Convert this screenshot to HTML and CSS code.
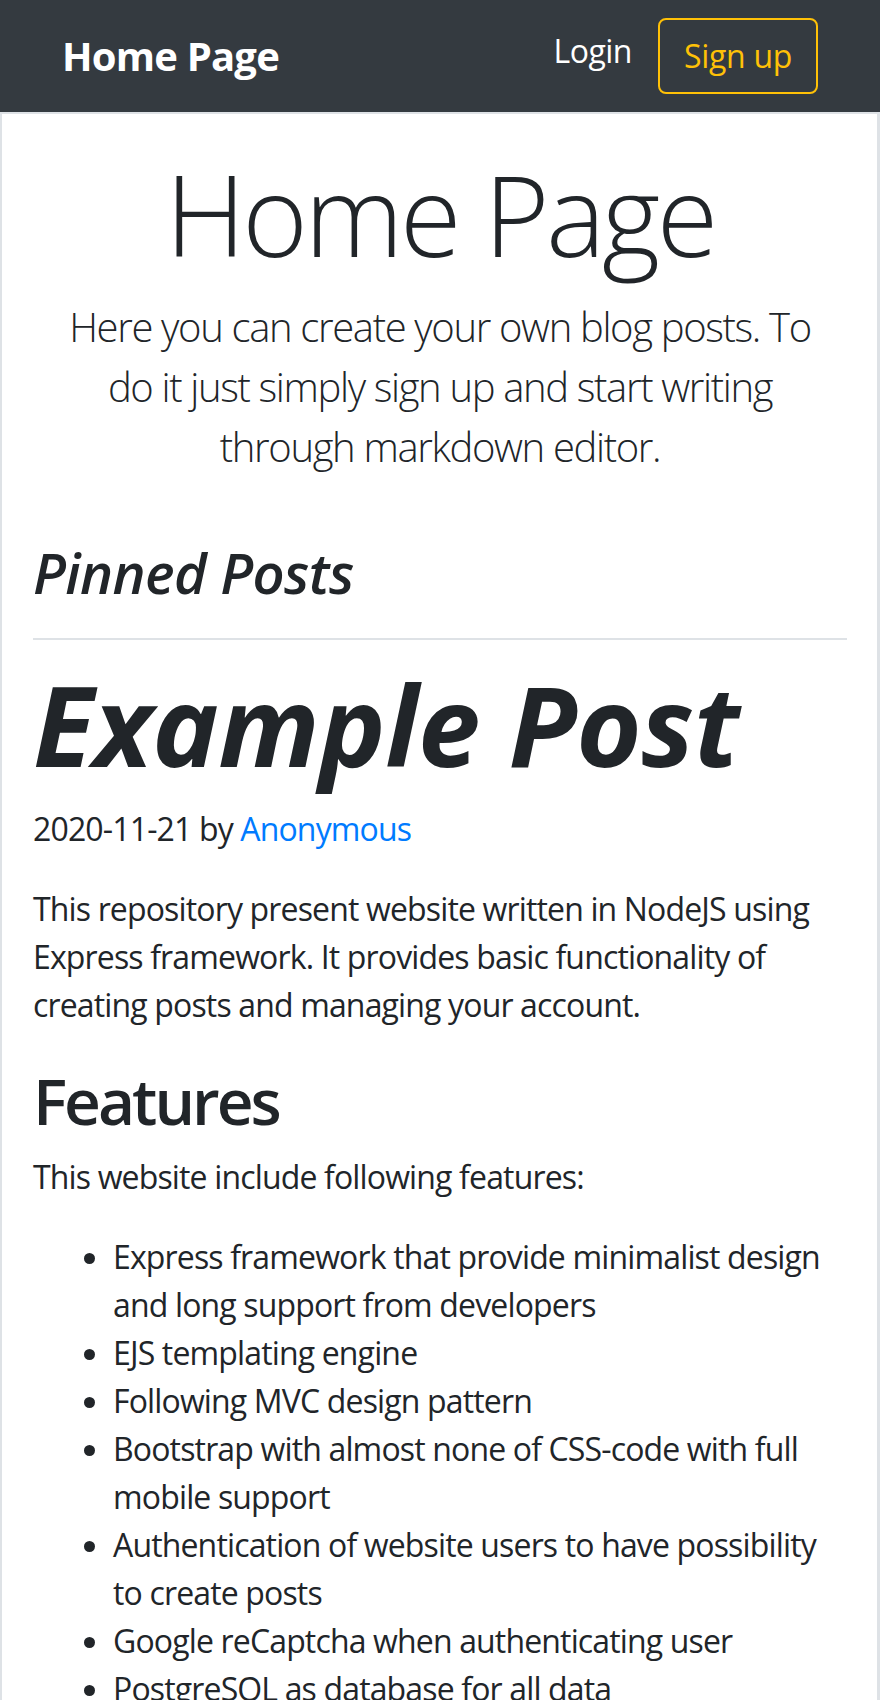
FILE: index.html
```html
<!DOCTYPE html>
<html lang="en">
<head>
<meta charset="utf-8">
<title>Home Page</title>
<link rel="stylesheet" href="styles.css">
</head>
<body>
<nav class="navbar">
  <div class="nav-inner">
    <a class="brand" href="#">Home Page</a>
    <div class="nav-right">
      <a class="nav-link" href="#">Login</a>
      <a class="btn-signup" href="#">Sign up</a>
    </div>
  </div>
</nav>
<main class="page">
  <section class="jumbotron">
    <h1 class="display">Home Page</h1>
    <p class="lead">Here you can create your own blog posts. To do it just simply sign up and start writing through markdown editor.</p>
  </section>
  <h3 class="pinned">Pinned Posts</h3>
  <hr class="divider">
  <article class="post">
    <h1 class="post-title">Example Post</h1>
    <p class="meta">2020-11-21 by <a href="#" class="author">Anonymous</a></p>
    <p class="text">This repository present website written in NodeJS using Express framework. It provides basic functionality of creating posts and managing your account.</p>
    <h2 class="section-title">Features</h2>
    <p class="intro">This website include following features:</p>
    <ul class="features">
      <li>Express framework that provide minimalist design and long support from developers</li>
      <li>EJS templating engine</li>
      <li>Following MVC design pattern</li>
      <li>Bootstrap with almost none of CSS-code with full mobile support</li>
      <li>Authentication of website users to have possibility to create posts</li>
      <li>Google reCaptcha when authenticating user</li>
      <li>PostgreSQL as database for all data</li>
    </ul>
  </article>
</main>
</body>
</html>
```

FILE: styles.css
```css
* { box-sizing: border-box; }
html, body { margin: 0; padding: 0; }
body {
  font-family: "Open Sans", "Noto Sans", sans-serif;
  font-size: 32px;
  line-height: 48px;
  letter-spacing: -0.85px;
  color: #212529;
  background: #ffffff;
}
a { text-decoration: none; }

.navbar {
  background: #343a40;
  height: 112px;
  padding: 0 32px;
}
.nav-inner {
  height: 100%;
  padding: 0 30px;
  display: flex;
  align-items: center;
  justify-content: space-between;
}
.brand {
  color: #ffffff;
  font-size: 40px;
  line-height: 60px;
  font-weight: 700;
  letter-spacing: -0.8px;
}
.nav-right {
  display: flex;
  align-items: center;
  gap: 26px;
}
.nav-link {
  color: #ffffff;
  font-size: 32px;
  line-height: 48px;
  letter-spacing: -0.5px;
  margin-bottom: 11px;
}
.btn-signup {
  display: block;
  color: #ffc107;
  border: 2px solid #ffc107;
  border-radius: 8px;
  padding: 12px 24px;
  font-size: 32px;
  line-height: 48px;
  letter-spacing: -0.3px;
}

.page {
  border-top: 2px solid #dee2e6;
  border-left: 2px solid #dee2e6;
  border-right: 3px solid #dee2e6;
  padding: 0 30px 40px 31px;
}
.jumbotron {
  text-align: center;
  padding-top: 33px;
}
.display {
  margin: 0 0 16px;
  font-size: 112px;
  line-height: 134.4px;
  font-weight: 300;
  letter-spacing: -3.4px;
}
.lead {
  margin: 0;
  font-size: 40px;
  line-height: 60px;
  font-weight: 300;
  letter-spacing: -1.35px;
  padding: 0 20px;
}
.pinned {
  margin: 62px 0 0;
  font-size: 56px;
  line-height: 67.2px;
  font-weight: 600;
  font-style: italic;
  letter-spacing: -0.6px;
}
.divider {
  margin: 31px 0 0;
  border: 0;
  border-top: 2px solid #dee2e6;
  height: 0;
}
.post-title {
  margin: 17px 0 0;
  font-size: 112px;
  line-height: 134.4px;
  font-weight: 700;
  font-style: italic;
  letter-spacing: -0.5px;
}
.meta {
  margin: 14px 0 0;
}
.author { color: #007bff; }
.text {
  margin: 32px 0 0;
}
.section-title {
  margin: 34px 0 0;
  font-size: 64px;
  line-height: 76.8px;
  font-weight: 600;
  letter-spacing: -3px;
}
.intro {
  margin: 13px 0 0;
}
.features {
  margin: 32px 0 0;
  padding-left: 80px;
}
```
